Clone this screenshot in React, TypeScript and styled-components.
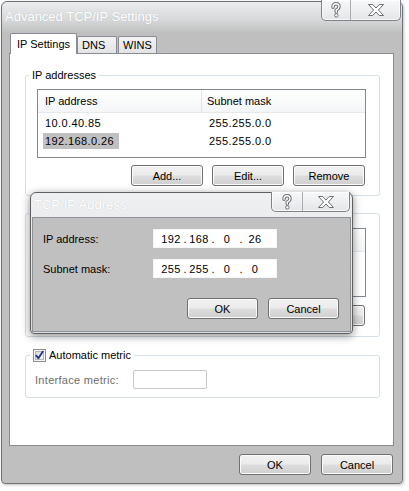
import React, { FC, Fragment } from 'react'
import styled, { createGlobalStyle } from 'styled-components'

const GlobalStyle = createGlobalStyle`
  html, body {
    margin: 0;
    padding: 0;
    background: #fff;
  }

  body {
    font-family: 'Liberation Sans', Arial, sans-serif;
    font-size: 11px;
    color: #000;
  }

  * {
    box-sizing: border-box;
  }
`

const Page = styled.div`
  width: 409px;
  height: 491px;
  padding: 1px 0 0 1px;
`

const Window = styled.div`
  position: relative;
  width: 402px;
  height: 483px;
  display: flex;
  flex-direction: column;
  border: 1px solid #6f7276;
  border-radius: 6px 6px 4px 4px;
  background: linear-gradient(#eaecee 0, #d6d8d9 18px, #bfbfbf 31px);
  box-shadow: 1px 1px 3px rgba(0, 0, 0, 0.25);
`

const TitleBar = styled.div<{ $h: number }>`
  height: ${p => p.$h}px;
  display: flex;
  justify-content: space-between;
  align-items: flex-start;
  flex-shrink: 0;
`

const Title = styled.div<{ $pt: number }>`
  padding: ${p => p.$pt}px 0 0 3px;
  font-size: 13px;
  line-height: 16px;
  color: #fff;
  text-shadow: 0 0 1px rgba(120, 120, 120, 0.35);
  white-space: nowrap;
`

const Captions = styled.div<{ $h: number; $mt: number; $mr: number }>`
  display: flex;
  height: ${p => p.$h}px;
  margin: ${p => p.$mt}px ${p => p.$mr}px 0 0;
  border: 1px solid #7f8388;
  border-top: none;
  border-radius: 0 0 5px 5px;
  overflow: hidden;
  background: linear-gradient(#f7f8f9, #e3e6e8);
  box-shadow: inset 0 0 0 1px rgba(255, 255, 255, 0.7);
`

const CaptionButton = styled.div<{ $w: number }>`
  width: ${p => p.$w}px;
  display: flex;
  align-items: center;
  justify-content: center;

  & + & {
    border-left: 1px solid #a9adb1;
  }
`

const TabArea = styled.div`
  display: flex;
  flex-direction: column;
  padding: 0 8px 0 7px;
`

const TabStrip = styled.div`
  height: 20px;
  display: flex;
  align-items: flex-end;
  padding-left: 1px;
`

const Tab = styled.div<{ $active?: boolean; $w: number; $ml?: number }>`
  position: relative;
  z-index: ${p => (p.$active ? 1 : 0)};
  width: ${p => p.$w}px;
  height: ${p => (p.$active ? 21 : 17)}px;
  margin-left: ${p => p.$ml ?? 0}px;
  margin-bottom: ${p => (p.$active ? -1 : 0)}px;
  padding: ${p => (p.$active ? '4px 0 0 6px' : '2px 0 0 4px')};
  border: 1px solid #898c95;
  border-bottom: none;
  border-radius: 2px 2px 0 0;
  background: ${p => (p.$active ? '#fff' : 'linear-gradient(#f3f3f3, #e3e3e3)')};
  line-height: 13px;
  white-space: nowrap;
`

const TabPanel = styled.div`
  height: 393px;
  display: flex;
  flex-direction: column;
  padding: 14px 13px 0 15px;
  border: 1px solid #898c95;
  background: #fff;
`

const GroupBox = styled.fieldset<{ $pad: string; $mt?: number }>`
  margin: ${p => p.$mt ?? 0}px 0 0 0;
  padding: ${p => p.$pad};
  min-width: 0;
  border: 1px solid #d5dfe5;
  border-radius: 3px;
`

const Legend = styled.legend<{ $ml: number }>`
  display: flex;
  align-items: center;
  gap: 3px;
  min-height: 14px;
  margin-left: ${p => p.$ml}px;
  padding: 0 3px;
  line-height: 14px;
`

const ListView = styled.div`
  height: 69px;
  border: 1px solid #828790;
  background: #fff;
`

const ListHeader = styled.div`
  display: grid;
  grid-template-columns: 163px 1fr;
  height: 23px;
  background: linear-gradient(#ffffff, #f4f5f6);
  border-bottom: 1px solid #e6e8ea;
`

const HeaderCell = styled.div`
  padding-left: 7px;
  line-height: 22px;

  & + & {
    border-left: 1px solid #e2e3e5;
    padding-left: 5px;
  }
`

const ListBody = styled.div`
  padding-top: 1px;
`

const ListRow = styled.div`
  display: grid;
  grid-template-columns: 163px 1fr;
  height: 18px;
  align-items: center;
`

const Cell = styled.div`
  padding-left: 5px;

  & + & {
    padding-left: 6px;
  }
`

const CellText = styled.span<{ $selected?: boolean }>`
  display: inline-block;
  padding: 0 5px 0 2px;
  line-height: 16px;
  letter-spacing: 0.4px;
  background: ${p => (p.$selected ? '#c0c0c0' : 'transparent')};
`

const ButtonRow = styled.div<{ $mt: number; $gap: number; $pr?: number }>`
  display: flex;
  justify-content: flex-end;
  gap: ${p => p.$gap}px;
  margin-top: ${p => p.$mt}px;
  padding-right: ${p => p.$pr ?? 0}px;
`

const Button = styled.div<{ $w: number }>`
  width: ${p => p.$w}px;
  height: 21px;
  display: flex;
  align-items: center;
  justify-content: center;
  border: 1px solid #707070;
  border-radius: 3px;
  background: linear-gradient(#f2f2f2 0%, #ebebeb 48%, #dddddd 52%, #cfcfcf 100%);
  box-shadow: inset 0 0 0 1px #fbfbfb;
`

const MetricRow = styled.div`
  display: flex;
  align-items: center;
`

const DimLabel = styled.div`
  width: 98px;
  color: #6d6d6d;
  letter-spacing: 0.3px;
`

const MetricInput = styled.div`
  width: 74px;
  height: 19px;
  border: 1px solid #c9c9c9;
  border-radius: 2px;
  background: #fff;
`

const Footer = styled.div`
  display: flex;
  justify-content: flex-end;
  gap: 10px;
  padding: 8px 9px 0 0;
`

const Dialog = styled.div`
  position: absolute;
  left: 28px;
  top: 190px;
  z-index: 5;
  width: 323px;
  height: 142px;
  display: flex;
  flex-direction: column;
  border: 1px solid #5d6064;
  border-radius: 6px 6px 4px 4px;
  background: linear-gradient(#eef0f1, #dadde0);
  box-shadow: 0 2px 9px rgba(0, 0, 0, 0.45);
`

const DialogBody = styled.div`
  flex: 1;
  display: flex;
  flex-direction: column;
  margin: 0 1px 1px 1px;
  padding: 11px 11px 12px 10px;
  border: 1px solid #8e9195;
  background: #c0c0c0;
`

const FieldGrid = styled.div`
  display: grid;
  grid-template-columns: 110px 124px;
  row-gap: 11px;
  align-items: center;
`

const IpBox = styled.div`
  height: 19px;
  display: flex;
  align-items: center;
  padding-left: 6px;
  background: #fff;
  border: 1px solid #f6f6f6;
`

const Octet = styled.span`
  width: 22px;
  text-align: center;
  letter-spacing: 0.3px;
`

const IpDot = styled.span`
  width: 6px;
  text-align: center;
`

const HelpIcon: FC = () => (
  <svg width="10" height="16" viewBox="0 0 10 16">
    <path d="M2 5.2 Q2 1.8 5 1.8 Q8 1.8 8 4.8 Q8 6.8 5.3 8 L5.3 10" fill="none" stroke="#6c7075" strokeWidth="3.4" strokeLinecap="round" />
    <path d="M2 5.2 Q2 1.8 5 1.8 Q8 1.8 8 4.8 Q8 6.8 5.3 8 L5.3 10" fill="none" stroke="#fff" strokeWidth="1.4" strokeLinecap="round" />
    <circle cx="5.3" cy="13.4" r="1.7" fill="#fff" stroke="#6c7075" strokeWidth="1" />
  </svg>
)

const CloseIcon: FC = () => (
  <svg width="16" height="12" viewBox="0 0 16 12">
    <polygon
      points="0.5,0.5 4.8,0.5 8,4 11.2,0.5 15.5,0.5 10.4,6 15.5,11.5 11.2,11.5 8,8 4.8,11.5 0.5,11.5 5.6,6"
      fill="#fff"
      stroke="#6c7075"
      strokeWidth="1"
      strokeLinejoin="round"
    />
  </svg>
)

const CheckIcon: FC = () => (
  <svg width="13" height="13" viewBox="0 0 13 13">
    <defs>
      <linearGradient id="cb" x1="0" y1="0" x2="1" y2="1">
        <stop offset="0" stopColor="#d9d9d9" />
        <stop offset="1" stopColor="#f7f7f7" />
      </linearGradient>
    </defs>
    <rect x="0.5" y="0.5" width="12" height="12" fill="#f4f4f4" stroke="#8e8f8f" />
    <rect x="2.5" y="2.5" width="8" height="8" fill="url(#cb)" stroke="#b8b8b8" />
    <path d="M3.2 6.6 L5.4 9.2 L9.8 2.6" fill="none" stroke="#23358a" strokeWidth="1.8" strokeLinecap="round" strokeLinejoin="round" />
  </svg>
)

const IpField: FC<{ octets: string[] }> = ({ octets }) => (
  <IpBox>
    {octets.map((octet, i) => (
      <Fragment key={i}>
        {i > 0 && <IpDot>.</IpDot>}
        <Octet>{octet}</Octet>
      </Fragment>
    ))}
  </IpBox>
)

const addresses = [
  { ip: '10.0.40.85', mask: '255.255.0.0', selected: false },
  { ip: '192.168.0.26', mask: '255.255.0.0', selected: true }
]

const App: FC = () => (
  <Page>
    <GlobalStyle />
    <Window>
      <TitleBar $h={31}>
        <Title $pt={7}>Advanced TCP/IP Settings</Title>
        <Captions $h={21} $mt={-2} $mr={1}>
          <CaptionButton $w={28}>
            <HelpIcon />
          </CaptionButton>
          <CaptionButton $w={50}>
            <CloseIcon />
          </CaptionButton>
        </Captions>
      </TitleBar>

      <TabArea>
        <TabStrip>
          <Tab $active $w={67}>IP Settings</Tab>
          <Tab $w={40}>DNS</Tab>
          <Tab $w={39} $ml={1}>WINS</Tab>
        </TabStrip>

        <TabPanel>
          <GroupBox $pad="7px 13px 9px 11px">
            <Legend $ml={-8}>IP addresses</Legend>
            <ListView>
              <ListHeader>
                <HeaderCell>IP address</HeaderCell>
                <HeaderCell>Subnet mask</HeaderCell>
              </ListHeader>
              <ListBody>
                {addresses.map(a => (
                  <ListRow key={a.ip}>
                    <Cell>
                      <CellText $selected={a.selected}>{a.ip}</CellText>
                    </Cell>
                    <Cell>
                      <CellText>{a.mask}</CellText>
                    </Cell>
                  </ListRow>
                ))}
              </ListBody>
            </ListView>
            <ButtonRow $mt={7} $gap={9} $pr={1}>
              <Button $w={72}>Add...</Button>
              <Button $w={72}>Edit...</Button>
              <Button $w={72}>Remove</Button>
            </ButtonRow>
          </GroupBox>

          {/* gateways group: almost fully covered by the dialog, only its frame shows */}
          <GroupBox $pad="8px 13px 10px 11px" $mt={10}>
            <Legend $ml={-8} />
            <ListView>
              <ListHeader>
                <HeaderCell />
                <HeaderCell />
              </ListHeader>
            </ListView>
            <ButtonRow $mt={8} $gap={9} $pr={1}>
              <Button $w={72} />
              <Button $w={72} />
              <Button $w={72} />
            </ButtonRow>
          </GroupBox>

          <GroupBox $pad="8px 13px 8px 9px" $mt={11}>
            <Legend $ml={-5}>
              <CheckIcon />
              <span>Automatic metric</span>
            </Legend>
            <MetricRow>
              <DimLabel>Interface metric:</DimLabel>
              <MetricInput />
            </MetricRow>
          </GroupBox>
        </TabPanel>
      </TabArea>

      <Footer>
        <Button $w={72}>OK</Button>
        <Button $w={72}>Cancel</Button>
      </Footer>

      <Dialog>
        <TitleBar $h={24}>
          <Title $pt={4}>TCP/IP Address</Title>
          <Captions $h={20} $mt={-1} $mr={2}>
            <CaptionButton $w={30}>
              <HelpIcon />
            </CaptionButton>
            <CaptionButton $w={47}>
              <CloseIcon />
            </CaptionButton>
          </Captions>
        </TitleBar>
        <DialogBody>
          <FieldGrid>
            <span>IP address:</span>
            <IpField octets={['192', '168', '0', '26']} />
            <span>Subnet mask:</span>
            <IpField octets={['255', '255', '0', '0']} />
          </FieldGrid>
          <ButtonRow $mt={20} $gap={10}>
            <Button $w={71}>OK</Button>
            <Button $w={71}>Cancel</Button>
          </ButtonRow>
        </DialogBody>
      </Dialog>
    </Window>
  </Page>
)

export default App
